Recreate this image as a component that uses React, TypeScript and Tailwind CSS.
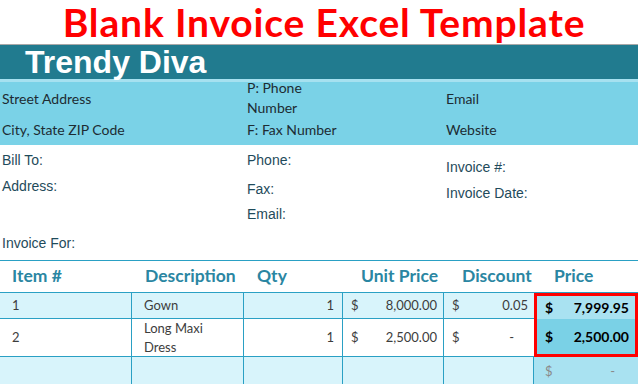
import React from "react";

const cal = { fontFamily: "Lato, 'Open Sans', sans-serif" };
const ari = { fontFamily: "'Liberation Sans', Arial, sans-serif" };

function Money({ v, bold, muted, dashAt }: { v: string; bold?: boolean; muted?: boolean; dashAt?: boolean }) {
  return (
    <div className={`flex h-full items-center justify-between pl-[8px] pr-[6px] ${bold ? "font-bold text-black text-[14px]" : muted ? "text-[#8a8a8a]" : "text-[#3d3d3d]"}`}>
      <span>$</span>
      <span className={dashAt ? "pr-[14px]" : ""}>{v}</span>
    </div>
  );
}

export default function App() {
  const cell = "border-r border-b border-[#2aa0c4] h-full";
  return (
    <div className="w-[638px] h-[384px] overflow-hidden bg-white relative" style={cal}>
      {/* title */}
      <div className="h-[45px] flex items-center justify-center pl-[10px] border-b border-[#a8a8a8]">
        <span className="text-[#ff0000] font-bold text-[39px] leading-none tracking-[0.85px]" style={{ fontFamily: "Lato, sans-serif" }}>
          Blank Invoice Excel Template
        </span>
      </div>
      {/* company band */}
      <div className="h-[34px] bg-[#217b8f] flex items-center pl-[25px]">
        <span className="text-white font-bold text-[32px] leading-none" style={ari}>Trendy Diva</span>
      </div>
      <div className="h-[3px] bg-[#a6e1f0]" />
      <div className="h-[63px] bg-[#7ad2e7] text-[14px] text-[#1d2c33] grid grid-cols-[245px_199px_1fr] pl-[2px]">
        <div className="flex flex-col">
          <div className="h-[32px] flex items-center">Street Address</div>
          <div className="h-[31px] flex items-center">City, State ZIP Code</div>
        </div>
        <div className="flex flex-col">
          <div className="h-[32px] flex flex-col justify-center leading-[20px]">
            <span>P: Phone</span>
            <span>Number</span>
          </div>
          <div className="h-[31px] flex items-center">F: Fax Number</div>
        </div>
        <div className="flex flex-col">
          <div className="h-[32px] flex items-center">Email</div>
          <div className="h-[31px] flex items-center">Website</div>
        </div>
      </div>
      {/* bill to section */}
      <div className="h-[115px] grid grid-cols-[245px_199px_1fr] pl-[2px] text-[14px] text-[#1f4b5b] leading-[20px]" style={ari}>
        <div className="flex flex-col">
          <div className="mt-[5px]">Bill To:</div>
          <div className="mt-[6px]">Address:</div>
          <div className="mt-[37px]">Invoice For:</div>
        </div>
        <div className="flex flex-col">
          <div className="mt-[5px]">Phone:</div>
          <div className="mt-[9px]">Fax:</div>
          <div className="mt-[5px]">Email:</div>
        </div>
        <div className="flex flex-col">
          <div className="mt-[12px]">Invoice #:</div>
          <div className="mt-[6px]">Invoice Date:</div>
        </div>
      </div>
      {/* table */}
      <div className="border-t border-[#2aa0c4]">
        <div className="h-[32px] border-b border-[#2aa0c4] grid grid-cols-[132px_112px_99px_101px_90px_104px] items-center text-[17.5px] font-bold text-[#2a86a2]">
          <div className="pl-[12px]">Item #</div>
          <div className="pl-[13px]">Description</div>
          <div className="pl-[13px]">Qty</div>
          <div className="pl-[18px]">Unit Price</div>
          <div className="pl-[18px]">Discount</div>
          <div className="pl-[20px]">Price</div>
        </div>
        <div className="grid grid-cols-[132px_112px_99px_101px_90px_104px] grid-rows-[26px_38px_30px] text-[13px] text-[#3d3d3d]">
          {/* row 1 */}
          <div className={`${cell} bg-[#d8f4fb] flex items-center pl-[12px]`}>1</div>
          <div className={`${cell} bg-[#d8f4fb] flex items-center pl-[12px]`}>Gown</div>
          <div className={`${cell} bg-[#d8f4fb] flex items-center justify-end pr-[8px]`}>1</div>
          <div className={`${cell} bg-[#d8f4fb]`}><Money v="8,000.00" /></div>
          <div className="border-b border-[#2aa0c4] bg-[#d8f4fb]"><Money v="0.05" /></div>
          <div className="bg-[#a9e2f1] border-[3px] border-b-0 border-[#ff0000]"><Money v="7,999.95" bold /></div>
          {/* row 2 */}
          <div className={`${cell} bg-white flex items-center pl-[12px]`}>2</div>
          <div className={`${cell} bg-white flex flex-col justify-center pl-[12px] leading-[19px]`}>
            <span>Long Maxi</span>
            <span>Dress</span>
          </div>
          <div className={`${cell} bg-white flex items-center justify-end pr-[8px]`}>1</div>
          <div className={`${cell} bg-white`}><Money v="2,500.00" /></div>
          <div className="border-b border-[#2aa0c4] bg-white"><Money v="-" dashAt /></div>
          <div className="bg-[#7ad1e6] border-[3px] border-t-0 border-[#ff0000]"><Money v="2,500.00" bold /></div>
          {/* row 3 */}
          <div className={`${cell} bg-[#d8f4fb]`} />
          <div className={`${cell} bg-[#d8f4fb]`} />
          <div className={`${cell} bg-[#d8f4fb]`} />
          <div className={`${cell} bg-[#d8f4fb]`} />
          <div className="border-b border-[#2aa0c4] bg-[#d8f4fb] border-r" />
          <div className="bg-[#a9e2f1] pl-[3px] pr-[3px]"><Money v="-" muted dashAt /></div>
        </div>
      </div>
    </div>
  );
}
